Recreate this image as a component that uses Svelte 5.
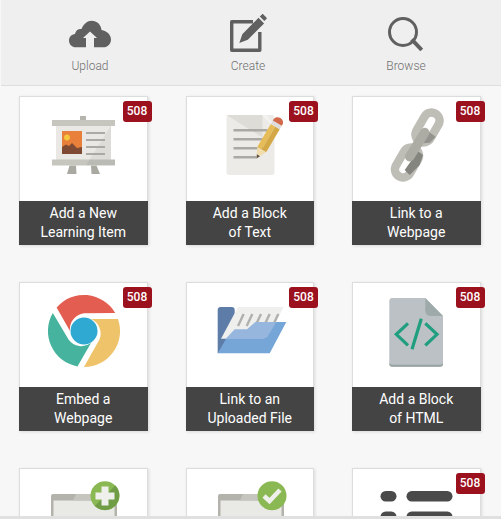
<script lang="ts">
  const cards = [
    { art: 'easel', lines: ['Add a New', 'Learning Item'], badge: 508 },
    { art: 'note', lines: ['Add a Block', 'of Text'], badge: 508 },
    { art: 'chain', lines: ['Link to a', 'Webpage'], badge: 508 },
    { art: 'chrome', lines: ['Embed a', 'Webpage'], badge: 508 },
    { art: 'folder', lines: ['Link to an', 'Uploaded File'], badge: 508 },
    { art: 'html', lines: ['Add a Block', 'of HTML'], badge: 508 },
    { art: 'plus', lines: [] },
    { art: 'check', lines: [] },
    { art: 'list', lines: [], badge: 508 },
  ]

  // map a coordinate read off a 3x crop onto the card's art box
  const pts = (list: number[][]) =>
    list.map(([x, y]) => `${((x - 35) / 3).toFixed(1)},${((y - 21) / 3).toFixed(1)}`).join(' ')
</script>

<div class="page">
  <header class="toolbar">
    <button class="tool">
      <svg viewBox="0 0 44 44" width="44" height="44">
        <path fill="#606060" d="M8 36.300C3.500 36.300 1 33 1 29.500 1 26 3.500 23.300 7 23 7.500 19.500 10.500 17.500 13.500 18 15.500 12.800 19.500 9.700 23.500 9.700 29 9.700 33 13.500 33.500 19 39 19.800 43 24 43 28.500 43 33 39.500 36.300 35.500 36.300H26V27H29L22 20.500 15 27H18V36.300Z"/>
      </svg>
      <span>Upload</span>
    </button>
    <button class="tool">
      <svg viewBox="0 0 44 44" width="44" height="44">
        <path fill="none" stroke="#606060" stroke-width="3.400" stroke-linejoin="round" d="M33.800 21V39.300H5.700V10.700H27"/>
        <path fill="#606060" d="M13.300 32l3-8.700L32.500 6.800l5.600 5.600L21.800 28.800ZM33.800 5.500l2.100-2.100c.5-.5 1-.5 1.500 0l3 3c.5.5.5 1 0 1.500l-2.100 2.200Z"/>
      </svg>
      <span>Create</span>
    </button>
    <button class="tool">
      <svg viewBox="0 0 44 44" width="44" height="44">
        <circle cx="19" cy="21" r="13.500" fill="none" stroke="#606060" stroke-width="3"/>
        <path stroke="#606060" stroke-width="4" d="M27.700 28.300l10 10.700"/>
      </svg>
      <span>Browse</span>
    </button>
  </header>

  <main class="grid">
    {#each cards as card}
      <article class="card">
        <svg class="art" viewBox="0 0 127 104" width="127" height="104">
          {#if card.art === 'easel'}
            <g transform="translate(-1 0)">
              <path fill="#b5b5ae" d="M61 19h6v5h-6Z"/>
              <path fill="#a9a9a2" d="M50.500 68.500h6.500l.5 8.500h-9.500ZM72 68.500h5.500l3.500 8.500h-8.500Z"/>
              <path fill="#e9e8e4" d="M37 29h55v34h-55Z"/>
              <path fill="#c6c6bf" d="M33 23h63v6h-63ZM33 62.500h63v6h-63Z"/>
              <path fill="#000" opacity=".05" d="M91.700 29 67 68.300H96V62.500H92V29Z"/>
              <path fill="#e8803b" d="M43 34h20v23h-20Z"/>
              <circle cx="48" cy="40.500" r="2.900" fill="#f5c83c"/>
              <path fill="#7f4a34" d="M43 50l4-2.500 3 1.500 3-3 5 5 5-1v7h-20Z"/>
              <path fill="#aaa9a3" d="M67 35h19v2h-19ZM67 42h19v2h-19ZM67 49h19v2h-19ZM67 56h19v2h-19Z"/>
            </g>
          {:else if card.art === 'note'}
            <rect x="39.500" y="18" width="48" height="60" rx="3" fill="#ecebe8"/>
            <path fill="#dddcd7" d="M39.500 18h36v22.500Z"/>
            <path fill="#f4f3f1" d="M75 18h4.500l8 11v2Z"/>
            <path fill="#aaa9a3" d="M46.500 32h34v2.500h-34ZM46.500 41h34v2.500h-34ZM46.500 50h30v2.500h-30ZM46.500 59h23v2.500h-23Z"/>
            <g transform="translate(69.500 61.500) rotate(30.500)">
              <path fill="#f0dcac" d="M0 0 5.200-10.500h-10.400Z"/>
              <path fill="#5c5148" d="M0 0 1.800-3.800h-3.600Z"/>
              <path fill="#e6bc58" d="M-5.200-10.500h5.200v-26.500h-5.200Z"/>
              <path fill="#d4a844" d="M0-10.500h5.200v-26.500h-5.200Z"/>
              <path fill="#dedddb" d="M-5.200-37h10.400v-4h-10.400Z"/>
              <path fill="#d1694a" d="M-5.200-41v-1.500a5.200 4.500 0 0 1 10.400 0v1.500Z"/>
            </g>
          {:else if card.art === 'chain'}
            <g fill="none" stroke-width="8.500" stroke="#bebeb7">
              <rect x="-8" y="-16" width="16" height="32" rx="8" transform="translate(74.500 30.500) rotate(30)"/>
              <rect x="-8" y="-16" width="16" height="32" rx="8" transform="translate(54 65.500) rotate(30)"/>
            </g>
            <polygon fill="#94948e" points="75.700,34.700 82.700,39.700 76.700,45.700 70,46.300"/>
            <polygon fill="#85857f" points="62.300,52.300 70,58 66.700,68 56.700,78 51.700,73 60,61.300"/>
            <path stroke="#acaca4" stroke-width="9.500" stroke-linecap="round" d="M71.700 35.500 56.700 59.700"/>
          {:else if card.art === 'chrome'}
            <g transform="translate(64 48)">
              {#each [['#e35d50', 0], ['#efc36a', 120], ['#45b39d', 240]] as [fill, turn]}
                <path {fill} transform="rotate({turn})" d="M31.200-18 0-17.700A16 16 0 0 0-14 0L-27.400-23.400A36 36 0 0 1 31.200-18Z"/>
              {/each}
              <circle r="13.500" fill="#2fa8d2"/>
            </g>
          {:else if card.art === 'folder'}
            <path fill="#5d7ca7" d="M30.700 70.300V27a3 3 0 0 1 3-3h11a3 3 0 0 1 3 3v40Z"/>
            <polygon fill="#efefed" points={pts([[188, 93], [325, 93], [275, 188], [137, 188]])}/>
            <g stroke="#b0b0ac" stroke-width="2.400">
              {#each [0, 1, 2, 3, 4] as i}
                <line x1={(205 + i * 26 - 35) / 3} y1="31" x2={(188 + i * 26 - 35) / 3} y2="43"/>
              {/each}
            </g>
            <polygon fill="#96b6dd" points={pts([[150, 190], [178, 160], [215, 160], [240, 138], [305, 138], [272, 190]])}/>
            <polygon fill="#76a5d8" points={pts([[127, 232], [152, 189], [265, 189], [276, 182], [303, 138], [333, 138], [283, 232]])}/>
          {:else if card.art === 'html'}
            <path fill="#bbc1c4" d="M36.300 18a3 3 0 0 1 3-3h33l17.700 18v47.700a3 3 0 0 1-3 3h-47.700a3 3 0 0 1-3-3Z"/>
            <path fill="#98a3a3" d="M36.300 78.700v2a3 3 0 0 0 3 3h47.700a3 3 0 0 0 3-3v-2a3 3 0 0 1-3 3h-47.700a3 3 0 0 1-3-3Z"/>
            <path fill="#9eaaaa" d="M72.300 15 90 33h-12.200a5.500 5.500 0 0 1-5.500-5.500Z"/>
            <g fill="none" stroke="#1f9f7f" stroke-width="3.200">
              <path d="M55 40.300 43.300 51.300 55 62.300M68.300 35.700 59 66.300M72.300 40.300 84 51.300 72.300 62.300"/>
            </g>
          {:else if card.art === 'plus' || card.art === 'check'}
            <path fill="#b3b3ab" d="M31 104V27a2 2 0 0 1 2-2h62a2 2 0 0 1 2 2v77Z"/>
            <path fill="#e9e9e6" d="M33.500 31.500h61v72h-61Z"/>
            <path fill="#c6c6bf" d="M56 25h39a2 2 0 0 1 2 2v4.500h-44Z"/>
            <circle cx="85" cy="26.700" r="14.500" fill="#8ab853"/>
            {#if card.art === 'plus'}
              <path fill="#6f9c45" d="M95.300 16.400a14.500 14.500 0 0 1-20.500 20.500Z"/>
              <path fill="#efefeb" d="M81.500 17.500h7v6h6v7h-6v6h-7v-6h-6v-7h6Z"/>
            {:else}
              <path fill="none" stroke="#efefeb" stroke-width="4.500" d="M77 27l5.500 5L93 21"/>
            {/if}
          {:else if card.art === 'list'}
            <g fill="#4a4a4a">
              <rect x="27.500" y="22" width="16" height="10.500" rx="5.200"/>
              <rect x="53.500" y="22" width="46" height="10.500" rx="5.200"/>
              <rect x="27.500" y="42.500" width="16" height="10.500" rx="5.200"/>
              <rect x="53.500" y="42.500" width="46" height="10.500" rx="5.200"/>
            </g>
          {/if}
        </svg>
        <div class="caption">
          {#each card.lines as line}<div>{line}</div>{/each}
        </div>
        {#if card.badge}
          <span class="badge">{card.badge}</span>
        {/if}
      </article>
    {/each}
  </main>

  <footer class="strip"></footer>
</div>

<style>
  :global(body) {
    background: #f7f7f7;
    font-family: Roboto, "Liberation Sans", sans-serif;
  }

  .page {
    height: 519px;
    display: flex;
    flex-direction: column;
    overflow: hidden;
  }

  .toolbar {
    flex-shrink: 0;
    height: 85px;
    margin-left: 1px;
    padding-left: 10px;
    box-sizing: content-box;
    background: #efefef;
    border-bottom: 1px solid #dedede;
    display: grid;
    grid-template-columns: repeat(3, 158px);
  }

  .tool {
    all: unset;
    display: flex;
    flex-direction: column;
    align-items: center;
    padding-top: 11px;
    cursor: pointer;
  }

  .tool span {
    margin-top: 4px;
    font-size: 12px;
    line-height: 14px;
    font-weight: 300;
    color: #6f6f6f;
  }

  .grid {
    flex: 1;
    min-height: 0;
    overflow: hidden;
    padding: 10px 0 0 19px;
    display: grid;
    grid-template-columns: repeat(3, 128.500px);
    grid-auto-rows: 149px;
    column-gap: 38px;
    row-gap: 37px;
    align-content: start;
  }

  .card {
    position: relative;
    display: flex;
    flex-direction: column;
    background: #fff;
    border: 1px solid #dddddd;
    border-bottom: 0;
    box-shadow: 1px 1px 3px rgba(0, 0, 0, 0.12);
  }

  .art {
    display: block;
    flex-shrink: 0;
  }

  .caption {
    height: 44px;
    margin: 0 -1px;
    padding-top: 3px;
    box-sizing: border-box;
    background: #444444;
    color: #fff;
    font-size: 14px;
    line-height: 19px;
    text-align: center;
  }

  .badge {
    position: absolute;
    top: 4px;
    right: -5px;
    width: 29px;
    height: 21px;
    border-radius: 3px;
    background: #9b111e;
    color: #fff;
    font-size: 12px;
    font-weight: 500;
    line-height: 21px;
    text-align: center;
  }

  .strip {
    flex-shrink: 0;
    height: 3px;
    background: #e0e0e0;
    position: relative;
  }
</style>
